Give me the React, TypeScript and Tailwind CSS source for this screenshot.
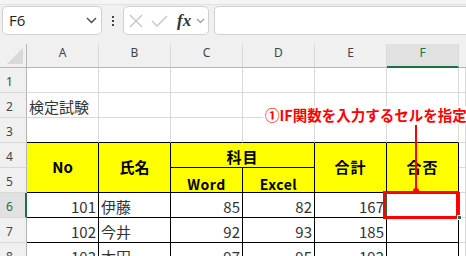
import React from 'react';

const grid = 'border-r border-b border-[#d9d9d9]';
const blk = 'border-r border-b border-black';
const cellFont = "font-['Noto_Sans_CJK_JP','Noto_Sans',sans-serif]";

const RowHead: React.FC<{ n: number; active?: boolean }> = ({ n, active }) => (
  <div
    className={`flex items-end pl-[6px] pb-[3px] text-[12px] leading-[14px] font-['Noto_Sans',sans-serif] border-b border-[#d9d9d9] ${
      active
        ? 'bg-[#e1e1e1] text-[#1e7145] border-r-2 border-r-[#1e7145]'
        : 'bg-[#f0f0f0] text-[#444] border-r border-r-[#b5b5b5]'
    }`}
  >
    {n}
  </div>
);

const ColHead: React.FC<{ l: string; active?: boolean }> = ({ l, active }) => (
  <div
    className={`flex justify-center pt-[2px] text-[12px] leading-[14px] font-['Noto_Sans',sans-serif] border-r border-r-[#d9d9d9] ${
      active
        ? 'bg-[#e1e1e1] text-[#1e7145] border-b-2 border-b-[#1e7145]'
        : 'bg-[#f0f0f0] text-[#444] border-b border-b-[#b5b5b5]'
    }`}
  >
    {l}
  </div>
);

const Num: React.FC<{ v: string }> = ({ v }) => (
  <div className={`${blk} flex items-end justify-end pr-[2px] text-[15px] leading-[20px] text-[#333]`}>{v}</div>
);

const Txt: React.FC<{ v: string }> = ({ v }) => (
  <div className={`${blk} flex items-end pl-[2px] text-[15px] leading-[20px] text-[#333]`}>{v}</div>
);

const App: React.FC = () => {
  const data = [
    ['101', '伊藤', '85', '82', '167'],
    ['102', '今井', '92', '93', '185'],
    ['103', '太田', '97', '95', '192'],
  ];

  return (
    <div className={`relative w-[466px] h-[256px] overflow-hidden bg-white ${cellFont}`}>
      {/* Formula bar */}
      <div className="h-[44px] bg-[#f0f0f0] relative">
        <div className="h-[5px] bg-[#f5f5f5] border-b border-[#e2e2e2]" />
        <div className="flex items-start pt-[1px]">
          <div className="ml-[2px] w-[100px] h-[29px] bg-white border border-[#d0d0d0] rounded-[5px] flex items-center justify-between pl-[6px] pr-[4px]">
            <span className="text-[15px] text-[#222] font-['Open_Sans',sans-serif]">F6</span>
            <svg width="11" height="7" viewBox="0 0 11 7">
              <path d="M1 1 L5.5 5.5 L10 1" fill="none" stroke="#444" strokeWidth="1.3" />
            </svg>
          </div>
          <div className="w-[21px] h-[29px] flex flex-col items-center justify-center gap-[2px]">
            <div className="w-[2px] h-[2px] bg-[#444]" />
            <div className="w-[2px] h-[2px] bg-[#444]" />
            <div className="w-[2px] h-[2px] bg-[#444]" />
          </div>
          <div className="w-[86px] h-[29px] bg-white border border-[#d0d0d0] rounded-[5px] flex items-center pl-[5px]">
            <svg width="14" height="14" viewBox="0 0 14 14">
              <path d="M1 1 L13 13 M13 1 L1 13" stroke="#c4c4c4" strokeWidth="1.3" />
            </svg>
            <svg width="17" height="12" viewBox="0 0 17 12" className="ml-[8px]">
              <path d="M1 6 L6 11 L16 1" fill="none" stroke="#c4c4c4" strokeWidth="1.3" />
            </svg>
            <span className="ml-[9px] text-[17px] leading-[20px] italic font-bold text-[#333] font-['Liberation_Serif',serif]">fx</span>
            <svg width="9" height="6" viewBox="0 0 9 6" className="ml-[5px]">
              <path d="M1 1 L4.5 4.5 L8 1" fill="none" stroke="#999" strokeWidth="1.2" />
            </svg>
          </div>
          <div className="ml-[5px] flex-1 h-[29px] bg-white border border-r-0 border-[#d0d0d0] rounded-l-[5px]" />
        </div>
      </div>

      {/* Sheet */}
      <div className="grid grid-cols-[27px_72px_72px_72px_72px_72px_72px_1fr] grid-rows-[24px_25px_25px_25px_25px_25px_25px_25px_25px]">
        <div className="bg-[#f0f0f0] border-r border-b border-[#b5b5b5] flex items-end justify-end pr-[3px] pb-[3px]">
          <svg width="16" height="16" viewBox="0 0 16 16">
            <path d="M16 0 L16 16 L0 16 Z" fill="#d9d9d9" />
          </svg>
        </div>
        <ColHead l="A" />
        <ColHead l="B" />
        <ColHead l="C" />
        <ColHead l="D" />
        <ColHead l="E" />
        <ColHead l="F" active />
        <div className="bg-[#f0f0f0] border-b border-[#b5b5b5]" />

        {/* row 1 */}
        <RowHead n={1} />
        <div className={grid} />
        <div className={grid} />
        <div className={grid} />
        <div className={grid} />
        <div className={grid} />
        <div className={grid} />
        <div className={grid} />

        {/* row 2 */}
        <RowHead n={2} />
        <div className={`${grid} flex items-end pl-[2px] text-[15px] leading-[20px] text-[#333] whitespace-nowrap`}>検定試験</div>
        <div className={grid} />
        <div className={grid} />
        <div className={grid} />
        <div className={grid} />
        <div className={grid} />
        <div className={grid} />

        {/* row 3 */}
        <RowHead n={3} />
        <div className="border-r border-r-[#d9d9d9] border-b border-b-black" />
        <div className="border-r border-r-[#d9d9d9] border-b border-b-black" />
        <div className="border-r border-r-[#d9d9d9] border-b border-b-black" />
        <div className="border-r border-r-[#d9d9d9] border-b border-b-black" />
        <div className="border-r border-r-[#d9d9d9] border-b border-b-black" />
        <div className="border-r border-r-[#d9d9d9] border-b border-b-black" />
        <div className={grid} />

        {/* rows 4-5 header */}
        <RowHead n={4} />
        <div className={`${blk} row-span-2 bg-[#ffff00] flex items-center justify-center text-[15px] font-bold text-black`}>No</div>
        <div className={`${blk} row-span-2 bg-[#ffff00] flex items-center justify-center text-[15px] font-bold text-black`}>氏名</div>
        <div className={`${blk} col-span-2 bg-[#ffff00] flex items-end justify-center text-[15px] leading-[20px] font-bold text-black tracking-[1px]`}>科目</div>
        <div className={`${blk} row-span-2 bg-[#ffff00] flex items-center justify-center text-[15px] font-bold text-black tracking-[1px]`}>合計</div>
        <div className={`${blk} row-span-2 bg-[#ffff00] flex items-center justify-center text-[15px] font-bold text-black tracking-[1px]`}>合否</div>
        <div className={grid} />
        <RowHead n={5} />
        <div className={`${blk} bg-[#ffff00] flex items-end justify-center text-[14px] leading-[16px] font-bold text-black tracking-[0.5px]`}>Word</div>
        <div className={`${blk} bg-[#ffff00] flex items-end justify-center text-[14px] leading-[16px] font-bold text-black tracking-[0.5px]`}>Excel</div>
        <div className={grid} />

        {data.map((r, i) => (
          <React.Fragment key={r[0]}>
            <RowHead n={6 + i} active={i === 0} />
            <Num v={r[0]} />
            <Txt v={r[1]} />
            <Num v={r[2]} />
            <Num v={r[3]} />
            <Num v={r[4]} />
            <div className={blk} />
            <div className={grid} />
          </React.Fragment>
        ))}
      </div>

      {/* Annotation callout */}
      <div className="absolute left-[263px] top-[106px] h-[18px] w-[203px] bg-white flex items-center pl-[2px] whitespace-nowrap text-[14.5px] leading-[18px] font-bold text-[#ff0000]">
        ①IF関数を入力するセルを指定
      </div>
      <div className="absolute left-[415px] top-[125px] w-[2px] h-[67px] bg-[#ff0000]" />
      <div className="absolute left-[413px] top-[188px] w-[6px] h-[6px] rounded-full bg-[#ff0000]" />

      {/* Selection + red frame on F6 */}
      <div className="absolute left-[385px] top-[192px] w-[75px] h-[27px] border-2 border-[#1e7145]" />
      <div className="absolute left-[383px] top-[191px] w-[76px] h-[28px] border-[3px] border-[#ff0000]" />
      <div className="absolute left-[457px] top-[215px] w-[5px] h-[5px] bg-[#1e7145] border border-white" />
    </div>
  );
};

export default App;
